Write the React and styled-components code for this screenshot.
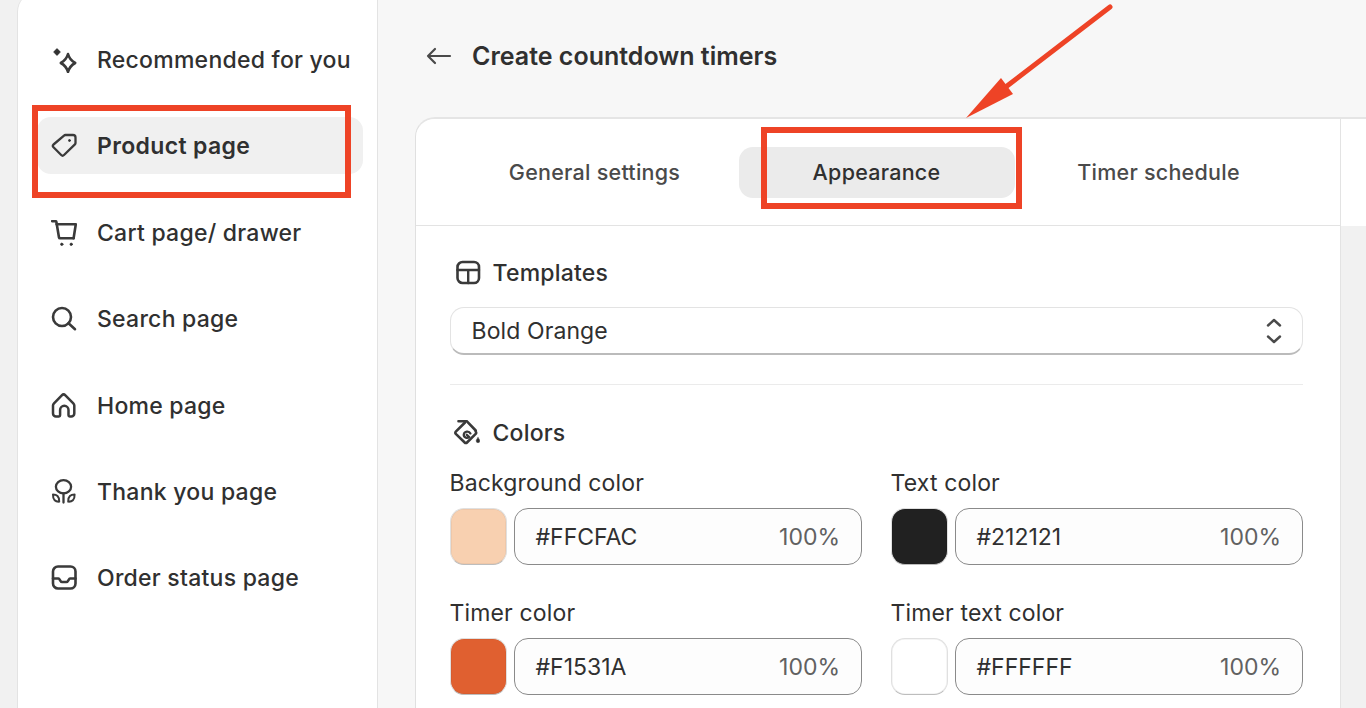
import React from "react"
import styled, { createGlobalStyle } from "styled-components"

const GlobalStyle = createGlobalStyle`
  html, body { margin: 0; padding: 0; background: #f1f1f1; }
  body { font-family: Inter, "Liberation Sans", sans-serif; color: #303030; }
  * { box-sizing: border-box; }
`

const Page = styled.div`
  position: relative;
  display: flex;
  width: 1366px;
  height: 708px;
  overflow: hidden;
  padding-left: 17px;
  background: #f1f1f1;
`

const Sidebar = styled.aside`
  flex: 0 0 361px;
  height: 730px;
  margin-top: -8px;
  padding: 38.5px 14px 0 19px;
  display: flex;
  flex-direction: column;
  gap: 29.4px;
  background: #fff;
  border: 1px solid #e3e3e3;
  border-width: 0 1px 0 1.5px;
  border-top-left-radius: 20px;
`

const NavItem = styled.div`
  display: flex;
  align-items: center;
  gap: 20px;
  height: 57px;
  padding: 2px 0 0 14px;
  border-radius: 14px;
  font-size: 23px;
  letter-spacing: ${({ $active }) => ($active ? "0.35px" : "0.25px")};
  font-weight: ${({ $active }) => ($active ? 600 : 500)};
  background: ${({ $active }) => ($active ? "#f0f0f0" : "transparent")};
  color: #303030;
`

const IconBox = styled.svg`
  flex: 0 0 26px;
  width: 26px;
  height: 26px;
  fill: none;
  stroke: #3a3a3a;
  stroke-width: 2.3;
  stroke-linecap: round;
  stroke-linejoin: round;
`

const Main = styled.main`
  flex: 1;
  min-width: 0;
  padding-left: 37px;
  background: #f7f7f7;
`

const Header = styled.header`
  display: flex;
  align-items: center;
  gap: 20px;
  height: 117px;
  padding: 0 0 6px 11px;
`

const BackArrow = styled.svg`
  width: 26px;
  height: 26px;
  fill: none;
  stroke: #4a4a4a;
  stroke-width: 2.2;
  stroke-linecap: round;
  stroke-linejoin: round;
`

const Title = styled.h1`
  margin: 0;
  font-size: 25px;
  font-weight: 600;
  letter-spacing: 0;
  color: #303030;
`

const Card = styled.section`
  border-top: 2px solid #e5e5e5;
  border-left: 1.5px solid #e0e0e0;
  border-top-left-radius: 20px;
  background: #f1f1f1;
  overflow: hidden;
  height: 593px;
`

const TabBar = styled.div`
  display: flex;
  background: #fff;
  height: 107px;
`

const Tabs = styled.div`
  flex: 0 0 924.5px;
  display: flex;
  align-items: center;
  gap: 6px;
  padding-left: 40.5px;
  border-right: 1px solid #e3e3e3;
  border-bottom: 1px solid #e3e3e3;
`

const Tab = styled.div`
  flex: 0 0 276px;
  height: 51px;
  display: flex;
  align-items: center;
  justify-content: center;
  border-radius: 14px;
  font-size: 21.5px;
  font-weight: 500;
  letter-spacing: 0.25px;
  color: ${({ $active }) => ($active ? "#303030" : "#4a4a4a")};
  background: ${({ $active }) => ($active ? "#ebebeb" : "transparent")};
`

const Panel = styled.div`
  width: 924.5px;
  height: 486px;
  padding: 33px 37px 0 33.5px;
  background: #fff;
  border-right: 1px solid #e3e3e3;
`

const SectionTitle = styled.div`
  display: flex;
  align-items: center;
  gap: ${({ $gap }) => $gap}px;
  height: 28px;
  padding-left: ${({ $inset }) => $inset}px;
  font-size: 23px;
  font-weight: 500;
  letter-spacing: 0.2px;
  color: #303030;
`

const Select = styled.div`
  display: flex;
  align-items: center;
  justify-content: space-between;
  height: 48px;
  margin-top: 20px;
  padding: 1px 19px 0 21px;
  font-size: 23px;
  letter-spacing: 0.1px;
  color: #303030;
  border: 1.5px solid #e3e3e3;
  border-bottom: 2px solid #bbb;
  border-radius: 14px;
  background: #fff;
`

const Chevrons = styled.svg`
  width: 18px;
  height: 26px;
  fill: none;
  stroke: #4a4a4a;
  stroke-width: 2.4;
  stroke-linecap: round;
  stroke-linejoin: round;
`

const Divider = styled.hr`
  height: 1px;
  margin: 29px 0 34px;
  border: 0;
  background: #ebebeb;
`

const ColorGrid = styled.div`
  display: grid;
  grid-template-columns: 412px 412px;
  column-gap: 29px;
  row-gap: 34px;
  margin-top: 22px;
`

const Field = styled.div`
  display: flex;
  flex-direction: column;
  gap: 11px;
`

const FieldLabel = styled.label`
  height: 28px;
  line-height: 28px;
  font-size: 23px;
  letter-spacing: 0.15px;
  color: #303030;
`

const FieldRow = styled.div`
  display: flex;
  gap: 7px;
  height: 57px;
`

const Swatch = styled.div`
  flex: 0 0 57px;
  border-radius: 14px;
  background: ${({ $color }) => $color};
  border: 1.5px solid #e0e0e0;
  border-bottom-color: #bdbdbd;
  box-shadow: inset 0 0 0 0.5px rgba(0, 0, 0, 0.08);
`

const HexInput = styled.div`
  flex: 1;
  display: flex;
  align-items: center;
  justify-content: space-between;
  padding: 1px 20.5px 0 21px;
  border: 1px solid #8a8a8a;
  border-radius: 14px;
  background: #fdfdfd;
  font-size: 23px;
  color: #303030;
`

const Percent = styled.span`
  color: #616161;
`

const Highlight = styled.div`
  position: absolute;
  left: ${({ $x }) => $x}px;
  top: ${({ $y }) => $y}px;
  width: ${({ $w }) => $w}px;
  height: ${({ $h }) => $h}px;
  border: 6px solid #ee4326;
`

const ArrowMark = styled.svg`
  position: absolute;
  left: 950px;
  top: 0;
  width: 180px;
  height: 125px;
`

const navItems = [
  {
    label: "Recommended for you",
    icon: (
      <>
        <path d="M6 2 9 5 6 8 3 5Z" fill="#303030" strokeWidth="1.2" />
        <path d="M17 7c1 3.8 2.8 6.6 7.2 9-4.4 2.4-6.2 5.2-7.2 9-1-3.8-2.8-6.6-7.2-9 4.4-2.4 6.2-5.2 7.2-9Z" strokeWidth="2.6" />
      </>
    ),
  },
  {
    label: "Product page",
    active: true,
    icon: (
      <>
        <path d="M14.5 2h7.5a2.5 2.5 0 0 1 2.5 2.5V10a2 2 0 0 1-.6 1.4L13 22a2 2 0 0 1-2.8 0l-7.7-7.7a2 2 0 0 1 0-2.8L13 2.6A2 2 0 0 1 14.5 2Z" />
        <circle cx="18.5" cy="7.5" r="1" fill="#303030" strokeWidth="1" />
      </>
    ),
  },
  {
    label: "Cart page/ drawer",
    icon: (
      <>
        <path d="M1.2 1.2h3.2c.5 0 .9.3 1 .8l2.6 15.5c.1.5.5.8 1 .8H22.6" strokeWidth="2.6" />
        <path d="M5.6 4.2h19.2L22.6 18.3" strokeWidth="2.6" />
        <circle cx="10.8" cy="24.3" r="1.2" fill="#303030" strokeWidth="0.8" />
        <circle cx="20.2" cy="24.3" r="1.2" fill="#303030" strokeWidth="0.8" />
      </>
    ),
  },
  {
    label: "Search page",
    icon: (
      <>
        <circle cx="11" cy="11" r="9" strokeWidth="2.6" />
        <path d="M17.5 17.2 24 23.2" strokeWidth="2.6" />
      </>
    ),
  },
  {
    label: "Home page",
    icon: (
      <path d="M2 20.5V12.6c0-.9.4-1.7 1-2.3l7.8-8c1-1 2.6-1 3.6 0l7.9 8c.6.6 1 1.4 1 2.3v7.9a3 3 0 0 1-3 3h-1.6a1.2 1.2 0 0 1-1.2-1.2V17a4.2 4.2 0 0 0-8.4 0v5.3c0 .7-.5 1.2-1.2 1.2H5a3 3 0 0 1-3-3Z" strokeWidth="2.5" />
    ),
  },
  {
    label: "Thank you page",
    icon: (
      <>
        <ellipse cx="12.5" cy="7.8" rx="7.6" ry="6.6" />
        <path d="M12.5 14.5V23.5" />
        <path d="M2 15.6c3.6 0 6.4 1.4 6.2 7-3.6.3-6.4-1.6-6.2-7Z" strokeWidth="2" />
        <path d="M23.6 15.6c-3.8 0-6.6 1.4-6.4 7 3.8.3 6.6-1.6 6.4-7Z" strokeWidth="2" />
      </>
    ),
  },
  {
    label: "Order status page",
    icon: (
      <>
        <rect x="2" y="1.5" width="22.5" height="22" rx="5" strokeWidth="2.6" />
        <path d="M2 13.5h5.5c1.4 0 1.6 3.5 3.6 3.5h4.3c2 0 2.2-3.5 3.6-3.5h5.5" strokeWidth="2.6" />
      </>
    ),
  },
]

const colorFields = [
  { label: "Background color", color: "#f8d0b0", hex: "#FFCFAC" },
  { label: "Text color", color: "#212121", hex: "#212121" },
  { label: "Timer color", color: "#e06030", hex: "#F1531A" },
  { label: "Timer text color", color: "#ffffff", hex: "#FFFFFF" },
]

export default function App() {
  return (
    <>
      <GlobalStyle />
      <Page>
        <Sidebar>
          {navItems.map((item) => (
            <NavItem key={item.label} $active={item.active}>
              <IconBox viewBox="0 0 26 26">{item.icon}</IconBox>
              {item.label}
            </NavItem>
          ))}
        </Sidebar>
        <Main>
          <Header>
            <BackArrow viewBox="0 0 26 26">
              <path d="M24 13H2M9 6l-7 7 7 7" />
            </BackArrow>
            <Title>Create countdown timers</Title>
          </Header>
          <Card>
            <TabBar>
              <Tabs>
                <Tab>General settings</Tab>
                <Tab $active>Appearance</Tab>
                <Tab>Timer schedule</Tab>
              </Tabs>
            </TabBar>
            <Panel>
              <SectionTitle $gap={12} $inset={5}>
                <IconBox viewBox="0 0 26 26">
                  <rect x="2.5" y="2" width="21.5" height="21" rx="5" strokeWidth="2.6" />
                  <path d="M2.5 10h21.5M13.2 10v13" strokeWidth="2.4" />
                </IconBox>
                Templates
              </SectionTitle>
              <Select>
                Bold Orange
                <Chevrons viewBox="0 0 18 26">
                  <path d="M3 7.5 9 2l6 5.5M3 18.5 9 24l6-5.5" />
                </Chevrons>
              </Select>
              <Divider />
              <SectionTitle $gap={13} $inset={4}>
                <IconBox viewBox="0 0 26 26">
                  <path d="M4.5 1.2h8.2l9 9.3" strokeWidth="2.6" />
                  <path d="M11 2.5 1.8 11.6a1.6 1.6 0 0 0 0 2.3l8.9 8.6a1.6 1.6 0 0 0 2.3 0l8.7-8.6a1.6 1.6 0 0 0 0-2.3" strokeWidth="2.6" />
                  <path d="M16.4 13.4c-1.4-2.8-6-2.4-6.6 1-.4 2.8 3.2 4.6 5.4 2.6l-2.4-2.2" />
                  <path d="M24 17.5c1.3 1.8 1.8 2.6 1.8 3.4a1.8 1.8 0 0 1-3.6 0c0-.8.5-1.6 1.8-3.4Z" fill="#303030" strokeWidth="0.5" />
                </IconBox>
                Colors
              </SectionTitle>
              <ColorGrid>
                {colorFields.map((field) => (
                  <Field key={field.label}>
                    <FieldLabel>{field.label}</FieldLabel>
                    <FieldRow>
                      <Swatch $color={field.color} />
                      <HexInput>
                        {field.hex}
                        <Percent>100%</Percent>
                      </HexInput>
                    </FieldRow>
                  </Field>
                ))}
              </ColorGrid>
            </Panel>
          </Card>
        </Main>
        <Highlight $x={32} $y={105} $w={319} $h={93} />
        <Highlight $x={761} $y={127} $w={261} $h={82} />
        <ArrowMark viewBox="0 0 180 125">
          <path d="M160 7 57 86" stroke="#ee4326" strokeWidth="5" strokeLinecap="round" fill="none" />
          <path d="M16 118 51 78 63 94Z" fill="#ee4326" />
        </ArrowMark>
      </Page>
    </>
  )
}
